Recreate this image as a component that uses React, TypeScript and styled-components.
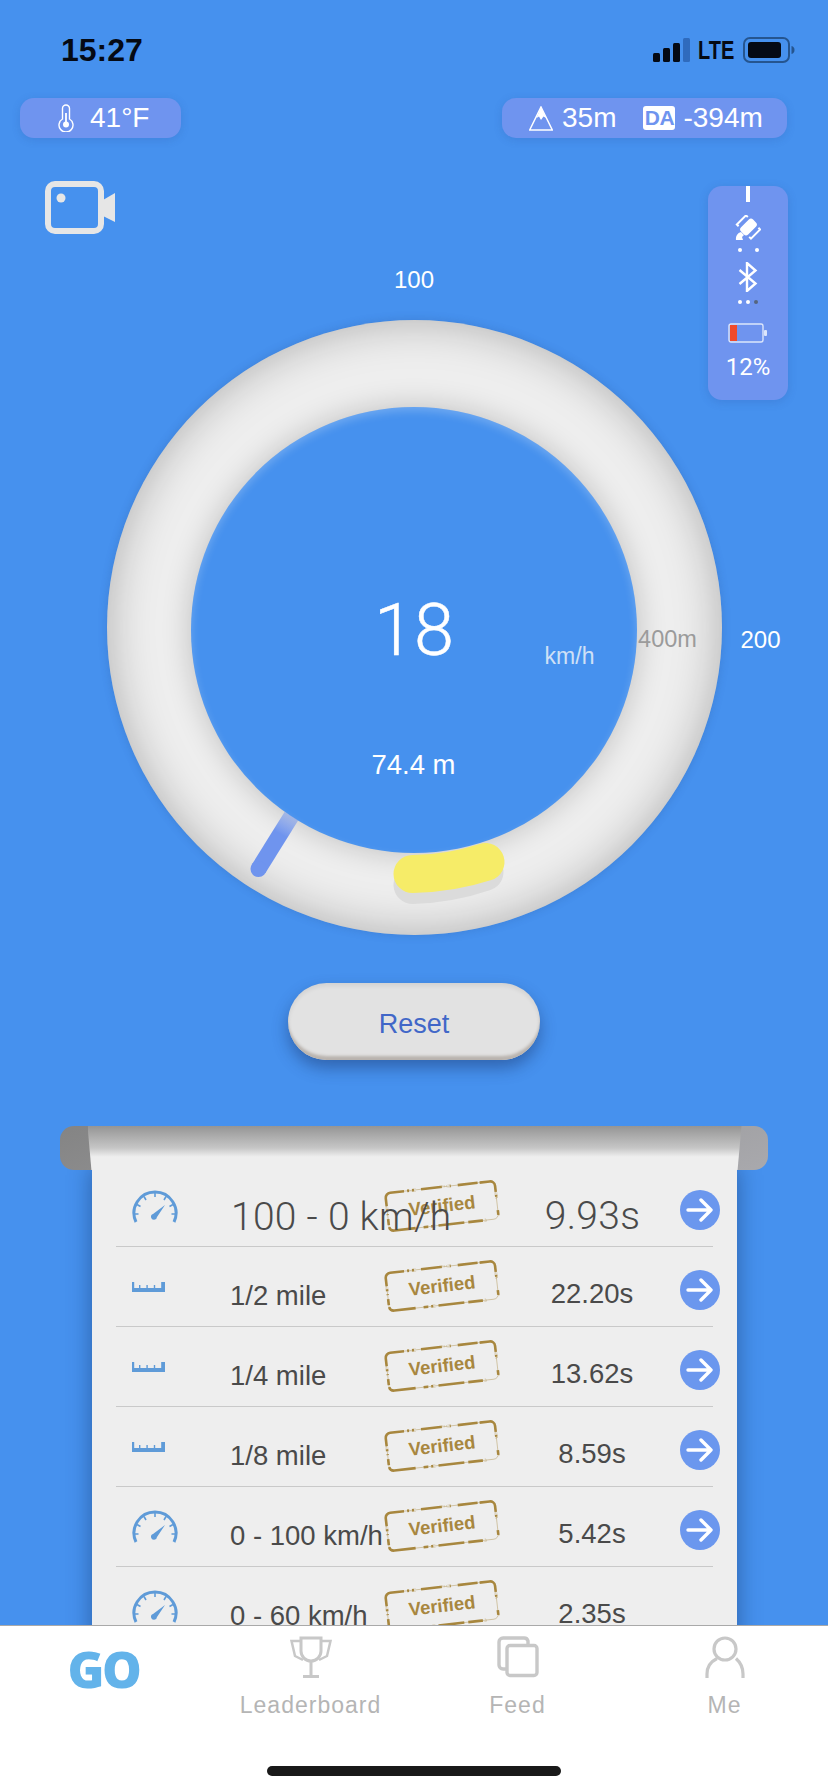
import React from "react";
import styled, { createGlobalStyle } from "styled-components";

const Global = createGlobalStyle`
  html, body { margin: 0; padding: 0; background: #4691ee; }
  * { box-sizing: border-box; }
`;

const SANS = `"Liberation Sans", Arial, sans-serif`;
const LIGHT = `Roboto, "Liberation Sans", sans-serif`;

const Screen = styled.div`
  width: 828px; height: 1792px; display: flex; flex-direction: column; overflow: hidden;
  background: #4691ee; font-family: ${SANS};
`;
const Main = styled.main`flex: 1; min-height: 0; overflow: hidden;`;

const StatusBar = styled.div`
  height: 98px; padding: 32px 33px 0 61px; display: flex; justify-content: space-between; align-items: flex-start;
`;
const Time = styled.span`font-size: 32px; line-height: 36px; font-weight: 700; color: #050a14;`;
const StatusRight = styled.div`display: flex; align-items: center; height: 36px; gap: 8px;`;
const Lte = styled.span`
  display: inline-block; font-size: 25px; font-weight: 700; color: #050a14; transform: scaleX(.8); width: 37px; transform-origin: left center;
`;

const PillRow = styled.div`display: flex; justify-content: space-between; padding: 0 41px 0 20px;`;
const Pill = styled.div<{ $w: number; $pad: number }>`
  width: ${p => p.$w}px; height: 40px; padding-left: ${p => p.$pad}px; border-radius: 14px; background: #6f94ef;
  display: flex; align-items: center; color: #fff; font-size: 28px; box-shadow: 0 2px 8px rgba(40,70,150,.18);
`;
const PillText = styled.span<{ $ml: number }>`margin-left: ${p => p.$ml}px; line-height: 40px;`;
const DaBox = styled.span`
  margin-left: 27px; width: 32px; height: 24px; border-radius: 3px; background: #fff; color: #6f94ef;
  font-size: 21px; font-weight: 700; line-height: 24px; text-align: center; letter-spacing: -.5px;
`;

const Cockpit = styled.section`position: relative; padding-top: 182px;`;
const CameraSlot = styled.div`position: absolute; left: 45px; top: 43px; line-height: 0;`;
const SidePanel = styled.div`
  position: absolute; left: 708px; top: 48px; width: 80px; height: 214px; border-radius: 14px; background: #6f94ef;
  box-shadow: 0 2px 10px rgba(40,70,150,.2); display: flex; flex-direction: column; align-items: center;
`;
const Tick = styled.div`width: 4px; height: 16px; background: #fff;`;
const Dots = styled.div<{ $mt: number }>`display: flex; gap: 4px; margin-top: ${p => p.$mt}px;`;
const Dot = styled.i<{ $off?: boolean }>`width: 4px; height: 4px; border-radius: 50%; background: ${p => (p.$off ? "#56657f" : "#fff")};`;
const DotGap = styled.i`width: 5px;`;
const PanelIcon = styled.div<{ $mt: number }>`margin-top: ${p => p.$mt}px; line-height: 0;`;
const Percent = styled.div`margin-top: 8px; font-family: ${LIGHT}; font-weight: 400; font-size: 24px; line-height: 28px; color: #fff;`;

const Ring = styled.div`
  position: relative; width: 615px; height: 615px; margin-left: 106.5px; border-radius: 50%; background: #eeeeee;
  display: grid; place-items: center;
  box-shadow: inset 0 0 46px rgba(0,0,0,.27), 0 0 10px rgba(30,60,120,.2);
`;
const Hole = styled.div`
  width: 446px; height: 446px; margin-top: 5px; border-radius: 50%; background: #4691ee;
  box-shadow: 0 0 30px rgba(0,0,0,.2), inset 0 4px 8px rgba(255,255,255,.22);
`;
const RingArt = styled.svg`position: absolute; inset: 0; overflow: visible;`;
const DialText = styled.span<{ $x: number; $y: number; $size: number; $color: string; $light?: boolean }>`
  position: absolute; left: ${p => p.$x}px; top: ${p => p.$y}px; transform: translate(-50%, -50%);
  font-size: ${p => p.$size}px; line-height: 1; color: ${p => p.$color}; white-space: nowrap;
  font-family: ${p => (p.$light ? LIGHT : SANS)}; font-weight: ${p => (p.$light ? 300 : 400)};
  ${p => (p.$light ? "-webkit-text-stroke: .5px #fff;" : "")}
`;

const ResetButton = styled.button`
  display: block; width: 252px; height: 77px; margin: 48px 0 0 288px; border: 0; border-radius: 39px; background: #e2e2e2;
  color: #4167c8; font-family: ${SANS}; font-size: 27px; padding: 6px 0 0;
  box-shadow: inset 0 -5px 3px -1px #b9b3ae, inset 0 3px 4px rgba(0,0,0,.07), 0 8px 16px rgba(20,40,90,.42);
`;

const Scroll = styled.section`width: 708px; margin: 66px 0 0 60px;`;
const Roll = styled.div`
  position: relative; z-index: 1; height: 44px; border-radius: 14px; background: linear-gradient(160deg, #848484, #a9a9ad);
`;
const Curl = styled.div`
  width: 654px; height: 44px; margin-left: 27.5px; background: linear-gradient(#959595, #c6c6c6 50%, #eee 70%);
  clip-path: polygon(0 0, 100% 0, 99.4% 100%, .6% 100%);
`;
const Sheet = styled.div`
  width: 645px; margin: -3px 0 0 32px; padding: 0 24px; height: 480px; background: #eee; box-shadow: 0 0 22px rgba(10,30,70,.42);
  position: relative;
`;
const Row = styled.div`
  position: relative; height: 80px; border-bottom: 1px solid #c9c9c9;
  display: grid; grid-template-columns: 114px 280px 164px 40px; align-items: start;
`;
const IconCell = styled.div<{ $top: number }>`padding: ${p => p.$top}px 0 0 16px; line-height: 0;`;
const Label = styled.span<{ $big?: boolean }>`
  position: relative; z-index: 1; margin-left: ${p => (p.$big ? 1 : 0)}px; white-space: nowrap; color: #4a4a4a;
  font-family: ${p => (p.$big ? LIGHT : SANS)}; font-weight: ${p => (p.$big ? 300 : 400)};
  letter-spacing: ${p => (p.$big ? ".3px" : "0")};
  font-size: ${p => (p.$big ? 39 : 27.5)}px; line-height: 40px; padding-top: ${p => (p.$big ? 30 : 29)}px; display: block;
`;
const Duration = styled(Label)`text-align: center; padding-top: ${p => (p.$big ? 29 : 27)}px;`;
const ArrowDisc = styled.div`
  width: 40px; height: 40px; margin: 23px 0 0 6px; border-radius: 50%; background: #6b97ee; display: grid; place-items: center;
`;
const Stamp = styled.div`
  position: absolute; left: 270px; top: 19px; width: 112px; height: 40px; transform: rotate(-6.5deg);
  display: grid; place-items: center; color: #a8873f; font-weight: 700; font-size: 18.5px;
`;
const StampBorder = styled.svg`position: absolute; inset: 0; overflow: visible;`;

const TabBar = styled.nav`
  position: relative; height: 167px; background: #fff; border-top: 1px solid #a9a9a9; display: flex; flex-direction: column;
`;
const Tabs = styled.div`display: grid; grid-template-columns: repeat(4, 207px);`;
const Tab = styled.div`display: flex; flex-direction: column; align-items: center; padding-top: 10px;`;
const TabLabel = styled.span`margin-top: 12px; font-size: 23px; line-height: 30px; letter-spacing: 1px; color: #b5b5b5;`;
const Go = styled.span`
  margin-top: -3px; font-family: "Noto Sans", sans-serif; font-weight: 900; font-size: 50px; line-height: 72px; letter-spacing: -2.5px; color: #63b3ea;
`;
const HomeBar = styled.div`width: 294px; height: 10px; margin: auto 0 16px 267px; border-radius: 5px; background: #191919;`;

const Gauge = () => (
  <svg width="46" height="34" viewBox="0 0 46 34" fill="none" stroke="#5f9bd8">
    <path d="M4 32 A21 21 0 1 1 42 32" strokeWidth="3" />
    <g strokeWidth="1.6">
      <path d="M23 3v4M12 6.500l2 3.500M34 6.500l-2 3.500M5 14.500l3.500 2M41 14.500l-3.500 2M3 24h3.500M43 24h-3.500" />
    </g>
    <path d="M33 15 L25 27 a3 3 0 1 1 -4 -3 Z" fill="#5f9bd8" stroke="none" />
  </svg>
);
const Ruler = () => (
  <svg width="33" height="10" viewBox="0 0 33 10" fill="#5f9bd8">
    <path d="M0 0h2.200v6h4.800V3h1.400v3h6V3h1.400v3h6V3h1.400v3h6V0h3.800v10H0z" />
  </svg>
);
const Arrow = () => (
  <svg width="28" height="24" viewBox="0 0 28 24" fill="none" stroke="#fff" strokeWidth="3.4" strokeLinecap="round" strokeLinejoin="round">
    <path d="M2 12h23M15 2l10 10-10 10" />
  </svg>
);
const StampFrame = () => (
  <StampBorder width="112" height="40" viewBox="0 0 112 40" fill="none" stroke="#a8873f">
    <rect x="1" y="1" width="110" height="38" rx="5" strokeWidth="2.600" strokeDasharray="14 3 9 5 24 2 4 7 20 2 30 12 5 14 18 4 26 3 12 8 28 2 6 4 40 3" />
    <path d="M20 1h14M58 1h9M95 39h8M40 39h10M1 14v8M111 12v6" strokeWidth="3" stroke="#eee" strokeDasharray="3 2" />
    <rect x="1" y="1" width="110" height="38" rx="5" strokeWidth=".8" opacity=".5" />
  </StampBorder>
);

type Item = { icon: "gauge" | "ruler"; label: string; time: string; big?: boolean; noArrow?: boolean };
const items: Item[] = [
  { icon: "gauge", label: "100 - 0 km/h", time: "9.93s", big: true },
  { icon: "ruler", label: "1/2 mile", time: "22.20s" },
  { icon: "ruler", label: "1/4 mile", time: "13.62s" },
  { icon: "ruler", label: "1/8 mile", time: "8.59s" },
  { icon: "gauge", label: "0 - 100 km/h", time: "5.42s" },
  { icon: "gauge", label: "0 - 60 km/h", time: "2.35s", noArrow: true },
];

export default function App() {
  return (
    <Screen>
      <Global />
      <Main>
        <StatusBar>
          <Time>15:27</Time>
          <StatusRight>
            <svg width="37" height="24" viewBox="0 0 37 24">
              <rect x="0" y="15" width="7" height="9" rx="1.5" fill="#050a14" />
              <rect x="10" y="10" width="7" height="14" rx="1.5" fill="#050a14" />
              <rect x="20" y="5" width="7" height="19" rx="1.5" fill="#050a14" />
              <rect x="30" y="0" width="7" height="24" rx="1.5" fill="#2f6bbd" />
            </svg>
            <Lte>LTE</Lte>
            <svg width="52" height="26" viewBox="0 0 52 26">
              <rect x="1" y="1" width="45" height="24" rx="6" fill="none" stroke="#25558f" strokeWidth="2" />
              <rect x="5" y="5" width="33" height="16" rx="3" fill="#050a14" />
              <path d="M48.500 9c2 .5 3 2 3 4s-1 3.500-3 4z" fill="#25558f" />
            </svg>
          </StatusRight>
        </StatusBar>
        <PillRow>
          <Pill $w={161} $pad={37}>
            <svg width="18" height="28" viewBox="0 0 18 28" fill="none" stroke="#fff" strokeWidth="1.4">
              <path d="M5.500 15V4.500a3.500 3.500 0 0 1 7 0V15a7 7 0 1 1-7 0Z" />
              <circle cx="9" cy="20.500" r="3" fill="#fff" stroke="none" />
              <path d="M9 9v10" strokeWidth="1.8" />
            </svg>
            <PillText $ml={15}>41°F</PillText>
          </Pill>
          <Pill $w={285} $pad={27}>
            <svg width="24" height="25" viewBox="0 0 24 25" fill="none">
              <path d="M12 1 23.300 24H.7Z" stroke="#fff" strokeWidth="1.5" />
              <path d="M12 1 17 12l-2.500-1.500L12 14l-2-3.500L7.500 12Z" fill="#fff" />
            </svg>
            <PillText $ml={9}>35m</PillText>
            <DaBox>DA</DaBox>
            <PillText $ml={8}>-394m</PillText>
          </Pill>
        </PillRow>
        <Cockpit>
          <CameraSlot>
            <svg width="70" height="53" viewBox="0 0 70 53" fill="none">
              <rect x="3" y="3" width="53" height="47" rx="7" stroke="#e6e6e6" strokeWidth="6" />
              <circle cx="16" cy="17" r="4.500" fill="#e6e6e6" />
              <path d="M58 19 70 12v29l-12-6Z" fill="#e6e6e6" />
            </svg>
          </CameraSlot>
          <Ring>
            <Hole />
            <RingArt width="615" height="615" viewBox="106.500 320 615 615" fill="none">
              <defs>
                <linearGradient id="needle" gradientUnits="userSpaceOnUse" x1="292" y1="813" x2="280" y2="834">
                  <stop offset="0" stopColor="#6f94ee" stopOpacity=".4" />
                  <stop offset="1" stopColor="#6f94ee" />
                </linearGradient>
              </defs>
              <path d="M291 816 258 869" stroke="url(#needle)" strokeWidth="16" />
              <circle cx="258" cy="869" r="8" fill="#6f94ee" />
              <path d="M412 885 A246 246 0 0 0 484 872" stroke="#dbdbdb" strokeWidth="38" strokeLinecap="round" />
              <path d="M412 874 A246 246 0 0 0 485 862" stroke="#f6ec68" strokeWidth="38" strokeLinecap="round" />
            </RingArt>
            <DialText $x={307.5} $y={-40} $size={24} $color="#fff">100</DialText>
            <DialText $x={307.5} $y={311} $size={72} $color="#fff" $light>18</DialText>
            <DialText $x={463} $y={336} $size={23} $color="#cfe0f6">km/h</DialText>
            <DialText $x={561} $y={320} $size={23.5} $color="#9b9b9b">400m</DialText>
            <DialText $x={654} $y={320} $size={24} $color="#fff">200</DialText>
            <DialText $x={307} $y={445} $size={27.5} $color="#fff">74.4 m</DialText>
          </Ring>
          <SidePanel>
            <Tick />
            <PanelIcon $mt={13}>
              <svg width="26" height="26" viewBox="0 0 26 26" fill="none">
                <g transform="rotate(45 13.500 12)">
                  <rect x="8.500" y="3.500" width="10" height="17" rx="3" fill="#fff" />
                  <path d="M6 5.500H3.500v13H6M21 5.500h2.500v13H21" stroke="#fff" strokeWidth="2" />
                </g>
                <path d="M1 25a7 7 0 0 1 5-8l3 3-2 2 1 3Z" fill="#fff" />
              </svg>
            </PanelIcon>
            <Dots $mt={7}>
              <Dot />
              <DotGap />
              <Dot />
            </Dots>
            <PanelIcon $mt={10}>
              <svg width="20" height="30" viewBox="0 0 20 30" fill="none" stroke="#fff" strokeWidth="2.400">
                <path d="M1.500 8 17.500 21.500 9 29V1l8.500 7.500L1.500 22" />
              </svg>
            </PanelIcon>
            <Dots $mt={8}>
              <Dot />
              <Dot />
              <Dot $off />
            </Dots>
            <PanelIcon $mt={19}>
              <svg width="40" height="22" viewBox="0 0 40 22" fill="none">
                <rect x="1" y="1" width="34" height="18" rx="2" stroke="#dce6fb" strokeWidth="1.400" />
                <rect x="2" y="2" width="7" height="16" fill="#ef4a2c" />
                <rect x="36" y="7" width="3" height="6" rx="1" fill="#dce6fb" />
              </svg>
            </PanelIcon>
            <Percent>12%</Percent>
          </SidePanel>
        </Cockpit>
        <ResetButton>Reset</ResetButton>
        <Scroll>
          <Roll>
            <Curl />
          </Roll>
          <Sheet>
            {items.map(it => (
              <Row key={it.label}>
                <Stamp>
                  <StampFrame />
                  Verified
                </Stamp>
                <IconCell $top={it.icon === "gauge" ? 23 : 35}>{it.icon === "gauge" ? <Gauge /> : <Ruler />}</IconCell>
                <Label $big={it.big}>{it.label}</Label>
                <Duration $big={it.big}>{it.time}</Duration>
                {!it.noArrow && (
                  <ArrowDisc>
                    <Arrow />
                  </ArrowDisc>
                )}
              </Row>
            ))}
          </Sheet>
        </Scroll>
      </Main>
      <TabBar>
        <Tabs>
          <Tab>
            <Go>GO</Go>
          </Tab>
          <Tab>
            <svg width="42" height="42" viewBox="0 0 42 42" fill="none" stroke="#c8c8c8" strokeWidth="3">
              <path d="M11 2h20v13a10 10 0 0 1-20 0Z" />
              <path d="M11 5H1.500l3.500 15 8 4M31 5h9.500L37 20l-8 4" strokeWidth="2.500" />
              <path d="M21 25v15M13 40.500h16" />
            </svg>
            <TabLabel>Leaderboard</TabLabel>
          </Tab>
          <Tab>
            <svg width="42" height="42" viewBox="0 0 42 42" fill="none" stroke="#c8c8c8" strokeWidth="3.400">
              <path d="M9 33H6a4 4 0 0 1-4-4V6a4 4 0 0 1 4-4h21a4 4 0 0 1 4 3v3" />
              <rect x="10" y="9.500" width="30" height="30" rx="3" />
            </svg>
            <TabLabel>Feed</TabLabel>
          </Tab>
          <Tab>
            <svg width="40" height="42" viewBox="0 0 40 42" fill="none" stroke="#c8c8c8" strokeWidth="3.200">
              <circle cx="20" cy="13" r="11" />
              <path d="M2 42V38C2 30 7 25 12 22.500M38 42V38c0-7-2-11-7-15.500" />
            </svg>
            <TabLabel>Me</TabLabel>
          </Tab>
        </Tabs>
        <HomeBar />
      </TabBar>
    </Screen>
  );
}
